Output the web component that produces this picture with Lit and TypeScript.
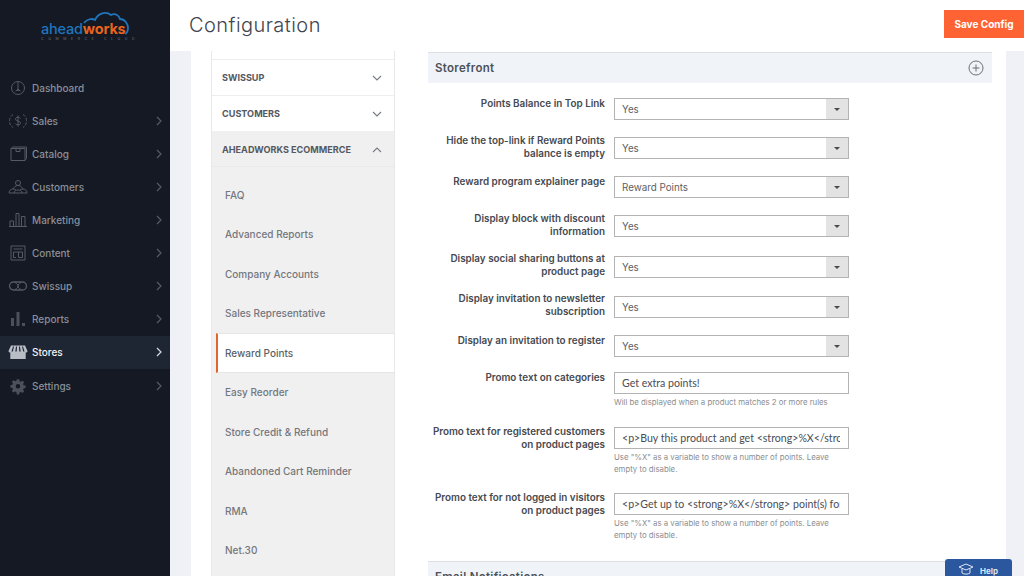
import { css, html, LitElement, svg } from "lit";
import { customElement } from "lit/decorators.js";

const icons: Record<string, any> = {
  dashboard: svg`<circle cx="10" cy="10" r="6.5"/><path d="M10 4v7M7.5 13c1.5-1 3.5-1 5 0M10 11l-2 2M10 11l2 2"/>`,
  sales: svg`<path d="M5 3.5C2.5 5 1.5 7.5 1.5 10s1 5 3.5 6.5M15 3.5c2.500 1.500 3.500 4 3.500 6.500s-1 5-3.500 6.500" stroke-dasharray="3 1.500"/><path d="M12.500 7.500C12 6.500 11 6.200 10 6.200c-1.500 0-2.500.8-2.500 1.900 0 2.600 5 1.300 5 3.900 0 1.100-1 1.900-2.500 1.900-1 0-2-.4-2.500-1.300M10 4.500v11"/>`,
  catalog: svg`<path d="M3 4.500h14v12H3zM3 4.500l1.500-1.500h14v11.500l-1.500 2M8 4.500v3h4v-3"/>`,
  customers: svg`<circle cx="10" cy="6" r="2.500"/><path d="M5.500 12c.5-2.500 2.500-3.500 4.500-3.500s4 1 4.500 3.500M1 16c0-2.500 2-4 4-4 1 0 2 .3 3 1M19 16c0-2.500-2-4-4-4-1 0-2 .3-3 1M1 16h18M6 16c0-2 2-3 4-3s4 1 4 3"/>`,
  marketing: svg`<path d="M2 16.500V11h3.500v5.500zM8 16.500V3.500h3v13zM13.500 16.500V6.500H17v10zM1 16.500h18"/>`,
  content: svg`<path d="M3 3h14v14H3zM5.500 6h9M5.500 9h9v5.500h-4V9M5.500 9v5.500h2.500"/>`,
  swissup: svg`<rect x="1.500" y="6" width="17" height="8" rx="4" stroke-width="1.300"/><path d="M7 6.500c2 1 3 2 3 3.500s-1 2.500-3 3.500M13 6.500c-2 1-3 2-3 3.500s1 2.500 3 3.500"/>`,
};

const filled: Record<string, any> = {
  reports: svg`<path d="M3 9h3v8H3zM8.500 3h3v14h-3zM14 14h3v3h-3z"/>`,
  stores: svg`<path d="M3 3.500h14l2.500 5.500c0 1-1 1.500-1.800 1.500v6.500H2.300v-6.500c-.8 0-1.800-.5-1.800-1.500z"/><path fill="#1e2533" d="M5 4.500h1L4.800 9.500H3.500zM8 4.500h1l-.3 5H7.300zM11 4.500h1l.7 5h-1.400zM14 4.500h1l1.500 5h-1.300z"/>`,
  settings: svg`<g transform="translate(2 2) scale(.8)"><path d="M8.500 1.500h3l.5 2.500 1.500.7 2.200-1.400 2 2.100-1.400 2.200.7 1.400 2.500.5v3l-2.500.5-.7 1.500 1.400 2.200-2.100 2-2.200-1.400-1.400.7-.5 2.500h-3L8 17.500l-1.500-.7-2.200 1.400-2-2.100 1.400-2.200-.7-1.400-2.500-.5v-3l2.500-.5.7-1.500-1.400-2.200 2.100-2 2.200 1.400 1.400-.7zM10 7.500a2.800 2.800 0 1 0 0 5.600 2.800 2.800 0 0 0 0-5.600z" fill-rule="evenodd"/></g>`,
};

const nav = [
  { id: "dashboard", name: "Dashboard", arrow: false },
  { id: "sales", name: "Sales", arrow: true },
  { id: "catalog", name: "Catalog", arrow: true },
  { id: "customers", name: "Customers", arrow: true },
  { id: "marketing", name: "Marketing", arrow: true },
  { id: "content", name: "Content", arrow: true },
  { id: "swissup", name: "Swissup", arrow: true },
  { id: "reports", name: "Reports", arrow: true },
  { id: "stores", name: "Stores", arrow: true, active: true },
  { id: "settings", name: "Settings", arrow: true },
];

const subItems = [
  "FAQ",
  "Advanced Reports",
  "Company Accounts",
  "Sales Representative",
  "Reward Points",
  "Easy Reorder",
  "Store Credit & Refund",
  "Abandoned Cart Reminder",
  "RMA",
  "Net.30",
];

const pointsHint = `Use "%X" as a variable to show a number of points. Leave empty to disable.`;

// h = distance to the next row, shift = label offset against the control
const rows: any[] = [
  { label: "Points Balance in Top Link", select: "Yes", h: 39, shift: -1 },
  { label: "Hide the top-link if Reward Points balance is empty", select: "Yes", h: 39, shift: -3 },
  { label: "Reward program explainer page", select: "Reward Points", h: 39, shift: -1 },
  { label: "Display block with discount information", select: "Yes", h: 41, shift: -3 },
  { label: "Display social sharing buttons at product page", select: "Yes", h: 40, shift: -4 },
  { label: "Display invitation to newsletter subscription", select: "Yes", h: 39, shift: -4 },
  { label: "Display an invitation to register", select: "Yes", h: 37, shift: -1 },
  {
    label: "Promo text on categories",
    input: "Get extra points!",
    hint: "Will be displayed when a product matches 2 or more rules",
    h: 55,
    shift: -1,
  },
  {
    label: "Promo text for registered customers on product pages",
    input: "<p>Buy this product and get <strong>%X</strong> point(s) for purchase</p>",
    hint: pointsHint,
    h: 66,
    shift: -2,
  },
  {
    label: "Promo text for not logged in visitors on product pages",
    input: "<p>Get up to <strong>%X</strong> point(s) for purchase</p>",
    hint: pointsHint,
    h: 68,
    shift: -2,
  },
];

const chevron = (d: string) =>
  html`<svg class="chev" viewBox="0 0 10 6" width="10" height="6"><path d=${d} /></svg>`;

@customElement("app-root")
export class AppRoot extends LitElement {
  static styles = css`
    :host {
      display: flex;
      width: 1024px;
      height: 576px;
      overflow: hidden;
      position: relative;
      font-family: Inter, "Liberation Sans", sans-serif;
      background: #fff;
    }
    .side {
      width: 170px;
      flex: none;
      background: #141923;
      display: flex;
      flex-direction: column;
    }
    .logo {
      height: 71px;
      box-sizing: border-box;
      padding: 10px 0 0 41px;
      position: relative;
    }
    .cloud {
      position: absolute;
      left: 80px;
      top: 10px;
    }
    .word {
      margin-top: 11px;
      font-size: 14.500px;
      line-height: 15px;
      font-weight: 500;
      letter-spacing: -0.2px;
      color: #1f76bd;
    }
    .word b {
      color: #e8641f;
      font-weight: 700;
    }
    .tag {
      font-size: 3.500px;
      line-height: 6px;
      letter-spacing: 4.600px;
      color: #6d7480;
      white-space: nowrap;
    }
    .nav-item {
      height: 33.120px;
      flex: none;
      display: flex;
      align-items: center;
      color: #8b8f99;
      font-size: 10px;
      font-weight: 500;
      padding: 0 8px 0 8px;
    }
    .nav-item.active {
      background: #1e2533;
      color: #f2f3f5;
    }
    .nav-item span {
      flex: 1;
      margin-left: 4px;
    }
    .nav-icon {
      fill: none;
      stroke: #555a66;
      stroke-width: 1;
    }
    .nav-icon.solid {
      fill: #4b505c;
      stroke: none;
    }
    .active .nav-icon.solid {
      fill: #b9bdc6;
    }
    .arrow {
      fill: none;
      stroke: #565b66;
      stroke-width: 1.200;
    }
    .active .arrow {
      stroke: #d8dade;
    }
    .main {
      flex: 1;
      min-width: 0;
      display: flex;
      flex-direction: column;
    }
    .top {
      height: 51px;
      flex: none;
      display: flex;
      justify-content: space-between;
      padding-left: 19px;
      background: #fff;
    }
    h1 {
      margin: 0;
      font-size: 20px;
      font-weight: 300;
      line-height: 51px;
      color: #41454f;
      letter-spacing: 0.45px;
    }
    .save {
      width: 80px;
      height: 28px;
      margin-top: 10px;
      background: #ff6233;
      color: #fff;
      font-size: 10px;
      font-weight: 700;
      display: flex;
      align-items: center;
      justify-content: center;
    }
    .body {
      flex: 1;
      min-height: 0;
      background: #f0f1f7;
      padding: 0 18px 0 21px;
      display: flex;
    }
    .panel {
      flex: 1;
      background: #fff;
      padding-left: 20px;
      display: flex;
      gap: 33px;
      overflow: hidden;
    }
    .tabs {
      width: 184px;
      flex: none;
      box-sizing: border-box;
      border: solid #e8e8e8;
      border-width: 0 1px;
      padding-top: 8px;
    }
    .tab {
      height: 36px;
      box-sizing: border-box;
      border-top: 1.500px solid #eeeeee;
      display: flex;
      align-items: center;
      justify-content: space-between;
      padding: 0 12px 0 10px;
      font-size: 9.100px;
      font-weight: 700;
      color: #55585f;
      text-transform: uppercase;
    }
    .tab.open {
      background: #f0f0f0;
      border-top: 0;
      border-bottom: 1px solid #e9e9e9;
      padding-top: 2px;
    }
    .chev {
      fill: none;
      stroke: #777b82;
      stroke-width: 1.100;
    }
    .sub {
      background: #f0f0f0;
      padding: 8px 0 60px;
    }
    .sub div {
      height: 39.500px;
      display: flex;
      align-items: center;
      padding-left: 13px;
      font-size: 10px;
      font-weight: 500;
      color: #74777e;
      box-sizing: border-box;
    }
    .sub .current {
      background: #fff;
      color: #5c5f66;
      border: solid #e6e6e6;
      border-width: 1px 0;
      border-left: 2px solid #e0662c;
      margin-left: 4px;
      padding-left: 7px;
    }
    .form {
      width: 564px;
      flex: none;
      padding-top: 1px;
    }
    .head {
      height: 31px;
      box-sizing: border-box;
      background: #f0f3f8;
      border-top: 1px solid #dcdfe4;
      display: flex;
      align-items: center;
      justify-content: space-between;
      padding: 0 8px 0 7px;
      font-size: 11.500px;
      font-weight: 600;
      color: #4d5158;
      letter-spacing: 0.3px;
    }
    .plus {
      fill: none;
      stroke: #6d7177;
      stroke-width: 1;
    }
    .rows {
      padding-top: 15px;
    }
    .row {
      display: grid;
      grid-template-columns: 177px 235px;
      column-gap: 9px;
      align-items: start;
    }
    label {
      text-align: right;
      font-size: 9.900px;
      line-height: 13px;
      font-weight: 600;
      color: #46494f;
    }
    .select {
      height: 22px;
      box-sizing: border-box;
      border: 1px solid #b3b3b3;
      display: flex;
      align-items: center;
      justify-content: space-between;
      padding-left: 7px;
      font-size: 9.800px;
      color: #5c5f65;
    }
    .caret {
      width: 22px;
      height: 100%;
      background: #e3e3e3;
      display: flex;
      align-items: center;
      justify-content: center;
    }
    .caret i {
      border: solid transparent;
      border-width: 3px 3px 0;
      border-top-color: #4a4a4a;
    }
    input {
      display: block;
      width: 100%;
      height: 22px;
      box-sizing: border-box;
      border: 1px solid #b3b3b3;
      border-radius: 0;
      outline: none;
      padding: 0 8px 0 7px;
      font: 400 10.600px Lato, "Liberation Sans", sans-serif;
      color: #4a4d52;
    }
    .hint {
      margin-top: 3px;
      font-size: 7.800px;
      line-height: 11.500px;
      color: #8a8d92;
    }
    .help {
      position: absolute;
      left: 945px;
      top: 559px;
      width: 67px;
      height: 17px;
      border-radius: 3px 3px 0 0;
      background: #2b579f;
      color: #dfe6f2;
      font-size: 8px;
      font-weight: 700;
      display: flex;
      align-items: flex-end;
      gap: 6px;
      padding-left: 13px;
      box-sizing: border-box;
    }
    .help svg {
      fill: none;
      stroke: #dfe6f2;
      stroke-width: 1;
    }
  `;

  renderNav(item: any) {
    const solid = filled[item.id];
    return html`<div class="nav-item ${item.active ? "active" : ""}">
      <svg class="nav-icon ${solid ? "solid" : ""}" viewBox="0 0 20 20" width="20" height="20">
        ${solid || icons[item.id]}
      </svg>
      <span>${item.name}</span>
      ${item.arrow
        ? html`<svg class="arrow" viewBox="0 0 6 10" width="6" height="10"><path d="M1 1l4 4-4 4" /></svg>`
        : ""}
    </div>`;
  }

  renderRow(row: any) {
    return html`<div class="row" style="height:${row.h}px">
      <label style="margin-top:${row.shift}px">${row.label}</label>
      <div>
        ${row.select
          ? html`<div class="select">${row.select}<div class="caret"><i></i></div></div>`
          : html`<input .value=${row.input} />`}
        ${row.hint ? html`<div class="hint">${row.hint}</div>` : ""}
      </div>
    </div>`;
  }

  render() {
    return html`
      <aside class="side">
        <div class="logo">
          <svg class="cloud" viewBox="0 0 50 26" width="50" height="26">
            <path
              d="M4 13C7 9 12 8 15 10 18 3 26 1 31 5 35 3 39 5 40 9 45 9 48 14 48 18 48 21 47 23 45 24"
              fill="none"
              stroke="#1f76bd"
              stroke-width="1.800"
            />
          </svg>
          <div class="word">ahead<b>works</b></div>
          <div class="tag">COMMERCE CLOUD</div>
        </div>
        ${nav.map((item) => this.renderNav(item))}
      </aside>
      <div class="main">
        <header class="top">
          <h1>Configuration</h1>
          <div class="save">Save Config</div>
        </header>
        <div class="body">
          <div class="panel">
            <div class="tabs">
              <div class="tab">Swissup ${chevron("M1 1l4 4 4-4")}</div>
              <div class="tab">Customers ${chevron("M1 1l4 4 4-4")}</div>
              <div class="tab open">Aheadworks Ecommerce ${chevron("M1 5l4-4 4 4")}</div>
              <div class="sub">
                ${subItems.map(
                  (name) => html`<div class=${name == "Reward Points" ? "current" : ""}>${name}</div>`
                )}
              </div>
            </div>
            <div class="form">
              <div class="head">
                Storefront
                <svg class="plus" viewBox="0 0 16 16" width="16" height="16">
                  <circle cx="8" cy="8" r="7" /><path d="M8 4.500v7M4.500 8h7" />
                </svg>
              </div>
              <div class="rows">${rows.map((row) => this.renderRow(row))}</div>
              <div class="head">Email Notifications</div>
            </div>
          </div>
        </div>
      </div>
      <div class="help">
        <svg viewBox="0 0 16 14" width="16" height="14">
          <path d="M1 5l7-3 7 3-7 3zM4 7v4c2 1.500 6 1.500 8 0V7" />
        </svg>
        Help
      </div>
    `;
  }
}
